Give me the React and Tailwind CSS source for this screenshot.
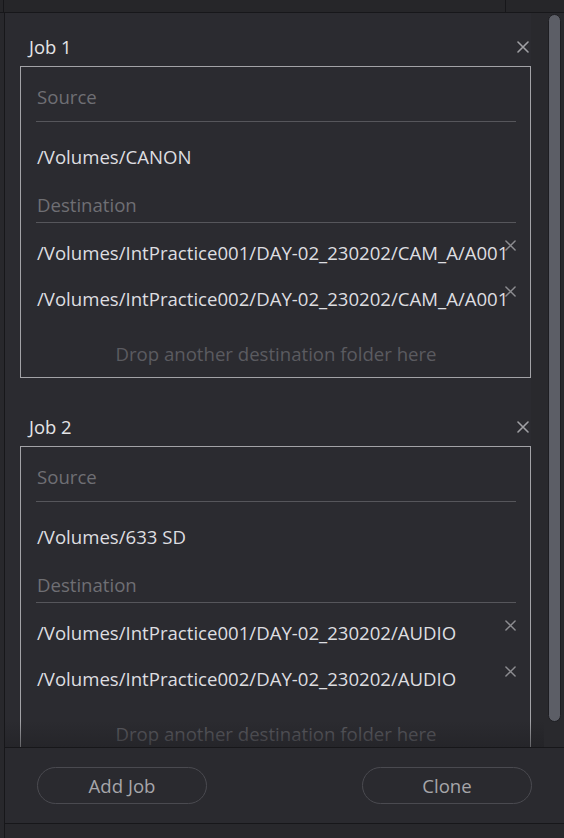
const font = { fontFamily: '"Open Sans", "Noto Sans", sans-serif' };

function CloseIcon({ className }) {
  return (
    <svg className={className} viewBox="0 0 12 12" fill="none">
      <path d="M1 1L11 11M11 1L1 11" stroke="currentColor" strokeWidth="1.6" strokeLinecap="round" />
    </svg>
  );
}

function DestRow({ path }) {
  return (
    <div className="relative h-[46px] flex items-center">
      <span className="text-[18.6px] leading-[26px] text-[#dedee0] whitespace-nowrap">{path}</span>
      <CloseIcon className="absolute right-0 top-[10px] w-[11px] h-[11px] text-[#8c8c90]" />
    </div>
  );
}

function Job({ title, source, dests, first }) {
  return (
    <div className={first ? "" : "mt-[30px]"}>
      <div className="h-[38px] flex items-center justify-between pl-[9px] pr-[2px]">
        <span className="text-[18.4px] text-[#e4e4e6]">{title}</span>
        <CloseIcon className="w-[12px] h-[12px] text-[#a0a0a4]" />
      </div>

      <div className="border border-[#a3a3a7] pl-[15px] pr-[14px] pb-[10px]">
        <div className="pt-[17px] pb-[11px] border-b border-[#56565b]">
          <span className="text-[18.6px] leading-[26px] text-[#6f6f74] pl-[1px]">Source</span>
        </div>
        <div className="pt-[22px] text-[18.6px] leading-[26px] text-[#dedee0] pl-[1px]">
          {source}
        </div>
        <div className="pt-[22px] pb-[4px] border-b border-[#56565b]">
          <span className="text-[18.6px] leading-[26px] text-[#6f6f74] pl-[1px]">Destination</span>
        </div>
        <div className="pt-[7px] pl-[1px]">
          {dests.map((d) => (
            <DestRow key={d} path={d} />
          ))}
        </div>
        <div className="mt-[19px] text-center text-[18.6px] leading-[26px] text-[#5b5b60]">
          Drop another destination folder here
        </div>
      </div>
    </div>
  );
}

export default function App() {
  return (
    <div className="w-[564px] h-[838px] bg-[#28282c] flex flex-col overflow-hidden" style={font}>
      {/* top strip */}
      <div className="h-[13px] flex border-b border-[#17171a] bg-[#262629]">
        <div className="w-[4px] border-r border-[#17171a]" />
        <div className="w-[502px] border-r border-[#17171a]" />
        <div className="flex-1" />
      </div>

      <div className="flex flex-1 min-h-0">
        <div className="w-[4px] bg-[#28282c]" />
        <div className="flex-1 flex flex-col border-l border-[#17171a] bg-[#2b2b30]">
          {/* scroll area */}
          <div className="relative h-[734px] flex overflow-hidden">
            <div className="w-[526px] pl-[15px] pt-[15px] overflow-hidden">
              <Job
                first
                title="Job 1"
                source="/Volumes/CANON"
                dests={[
                  "/Volumes/IntPractice001/DAY-02_230202/CAM_A/A001",
                  "/Volumes/IntPractice002/DAY-02_230202/CAM_A/A001",
                ]}
              />
              <Job
                title="Job 2"
                source="/Volumes/633 SD"
                dests={[
                  "/Volumes/IntPractice001/DAY-02_230202/AUDIO",
                  "/Volumes/IntPractice002/DAY-02_230202/AUDIO",
                ]}
              />
            </div>
            <div className="flex-1 bg-[#29292d]">
              <div className="ml-[17px] mt-[1px] w-[13px] h-[708px] rounded-full bg-[#5c5e66] border border-[#1e1e22]" />
            </div>
            <div className="absolute left-0 right-[20px] bottom-0 h-[26px] bg-gradient-to-b from-transparent to-[#1f1f23]/50" />
          </div>

          {/* footer */}
          <div className="h-[77px] border-t border-b border-[#17171a] bg-[#2a2a2f] flex items-center justify-between pl-[32px] pr-[32px]">
            <button className="w-[170px] h-[37px] rounded-full border border-[#4a4a50] text-[18.6px] text-[#a6a6aa]">
              Add Job
            </button>
            <button className="w-[170px] h-[37px] rounded-full border border-[#4a4a50] text-[18.6px] text-[#a6a6aa]">
              Clone
            </button>
          </div>
          <div className="flex-1 bg-[#28282c]" />
        </div>
      </div>
    </div>
  );
}
